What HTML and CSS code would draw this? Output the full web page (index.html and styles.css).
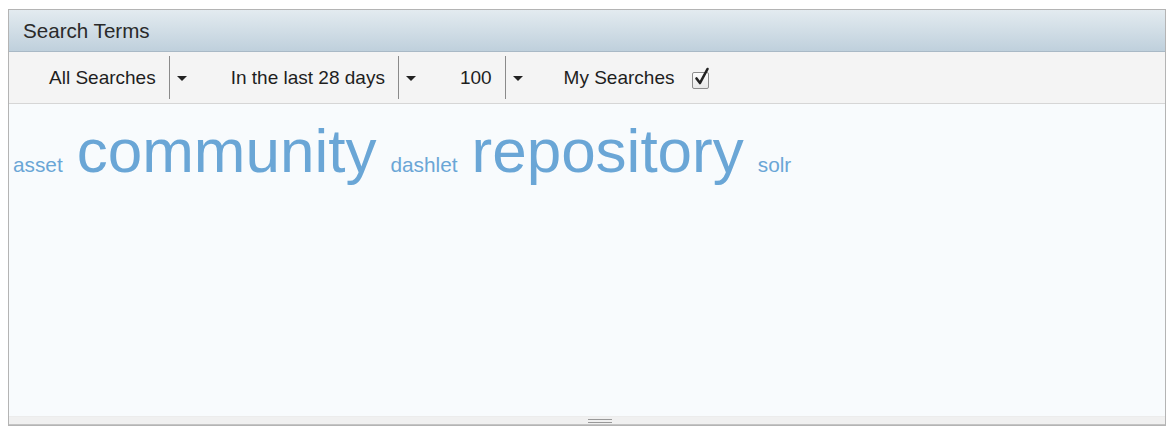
FILE: index.html
```html
<!DOCTYPE html>
<html>
<head>
<meta charset="utf-8">
<link rel="stylesheet" href="styles.css">
</head>
<body>
<div class="panel">
  <div class="title">Search Terms</div>
  <div class="toolbar">
    <div class="menu"><span class="label">All Searches</span><span class="sep"></span><span class="arrow"></span></div>
    <div class="menu"><span class="label">In the last 28 days</span><span class="sep"></span><span class="arrow"></span></div>
    <div class="menu last"><span class="label">100</span><span class="sep"></span><span class="arrow"></span></div>
    <label class="mine"><span class="label">My Searches</span>
      <span class="check"><svg width="20" height="24" viewBox="0 0 20 24"><path d="M4.5 13.5 L8 18 L15.5 4" fill="none" stroke="#222" stroke-width="2.6" stroke-linecap="round" stroke-linejoin="round"/></svg></span>
    </label>
  </div>
  <div class="cloud">
    <span class="word small">asset</span>
    <span class="word big">community</span>
    <span class="word small">dashlet</span>
    <span class="word big">repository</span>
    <span class="word small">solr</span>
  </div>
  <div class="resize"><span class="grip"></span></div>
</div>
</body>
</html>
```
FILE: styles.css
```css
html, body {
  margin: 0;
  padding: 0;
  background: #ffffff;
}
body {
  padding: 9px 0 0 8px;
  font-family: "Liberation Sans", Arial, Helvetica, sans-serif;
}
.panel {
  width: 1156px;
  border: 1px solid #b4b4b4;
  background: #f8fbfd;
}
.title {
  height: 42px;
  box-sizing: border-box;
  padding: 9px 0 0 14px;
  font-size: 20.6px;
  color: #2a2a2a;
  background: linear-gradient(#e3ebf0, #bfd0dc);
  border-bottom: 1px solid #a9b9c6;
}
.toolbar {
  height: 52px;
  box-sizing: border-box;
  background: #f4f4f4;
  border-bottom: 1px solid #d6d6d6;
  display: flex;
  align-items: center;
  padding-left: 40px;
  font-size: 19px;
  color: #1e1e1e;
}
.menu {
  display: flex;
  align-items: center;
  margin-right: 44px;
}
.menu.last {
  margin-right: 41px;
}
.menu .label {
  margin-right: 13px;
}
.sep {
  width: 1px;
  height: 43px;
  background: #8a8a8a;
  margin-right: 7px;
}
.arrow {
  width: 0;
  height: 0;
  border-left: 5px solid transparent;
  border-right: 5px solid transparent;
  border-top: 5px solid #222;
  margin-top: 2px;
}
.mine {
  display: flex;
  align-items: center;
}
.mine .label {
  margin-right: 18px;
}
.check {
  position: relative;
  width: 15px;
  height: 15px;
  border: 1px solid #8c8c8c;
  border-radius: 2px;
  background: linear-gradient(#fdfdfd, #e8e8e8);
  margin-top: 5px;
}
.check svg {
  position: absolute;
  left: -1px;
  top: -8px;
}
.cloud {
  height: 312px;
  box-sizing: border-box;
  padding: 11px 0 0 4px;
  display: flex;
  align-items: baseline;
  column-gap: 14px;
  color: #6aa6d6;
  line-height: 72px;
}
.word.small {
  font-size: 20.8px;
}
.word.big {
  font-size: 62px;
}
.resize {
  height: 9px;
  background: #f0f0f0;
  border-top: 1px solid #ececec;
  border-bottom: 1px solid #c4c4c4;
  box-sizing: border-box;
  display: flex;
  justify-content: center;
  padding-top: 2px;
}
.grip {
  width: 24px;
  height: 4px;
  margin-left: 26px;
  border-top: 1px solid #999;
  border-bottom: 1px solid #999;
  box-sizing: border-box;
}
```
